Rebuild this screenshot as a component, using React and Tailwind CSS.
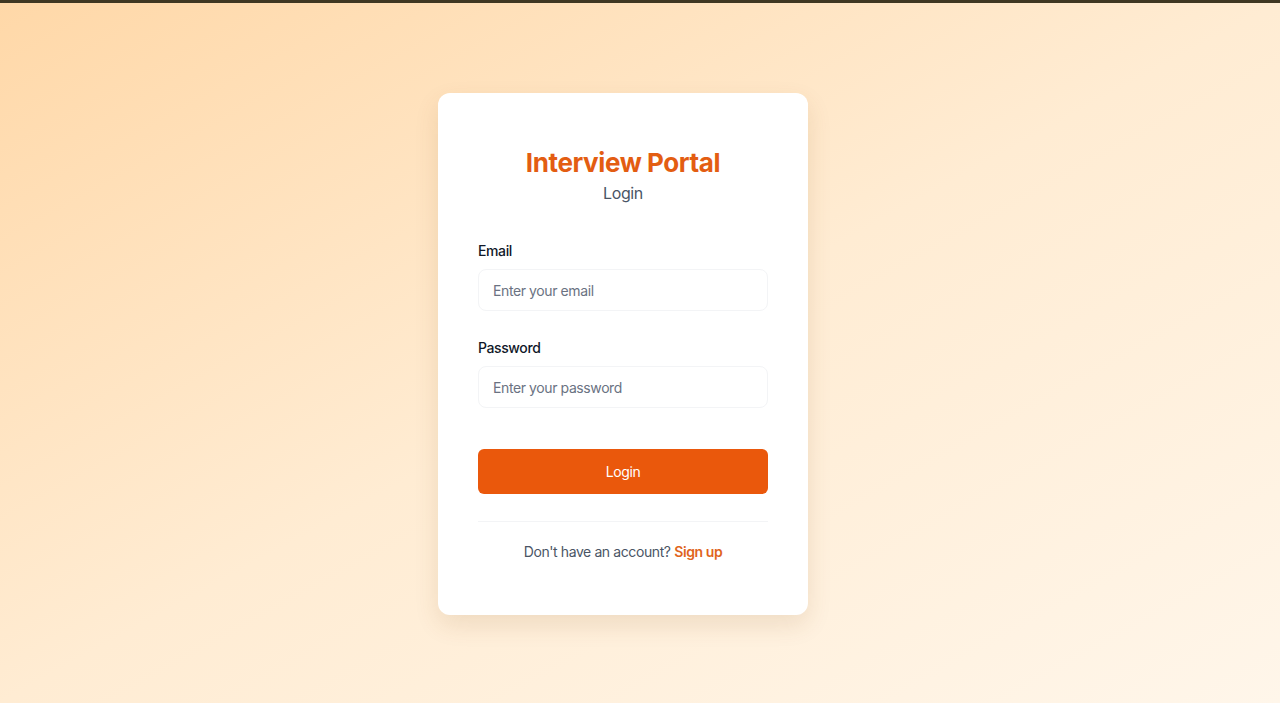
export default function App() {
  return (
    <div className="flex min-h-screen flex-col tracking-[-0.025em]" style={{ fontFamily: 'Inter, "Noto Sans", sans-serif' }}>
      <div className="h-[3px] bg-[#3f3722]" />
      <div className="flex flex-1 items-center justify-center bg-gradient-to-br from-[#ffd8a8] via-[#ffecd3] to-[#fff6ea] pt-[2px] pr-[34px]">
        <div className="w-[370px] rounded-xl bg-white px-10 pt-[52px] pb-[53px] shadow-[0_10px_25px_rgba(120,70,20,0.12)]">
          <div className="text-center">
            <h1 className="text-[26px] font-bold leading-9 text-[#e35d12]">Interview Portal</h1>
            <p className="text-base text-gray-600">Login</p>
          </div>

          <form className="mt-9" onSubmit={(e) => e.preventDefault()}>
            <div>
              <label className="mb-2 block text-sm font-medium text-gray-900">Email</label>
              <input
                type="email"
                placeholder="Enter your email"
                className="h-[42px] w-full rounded-lg border border-gray-100 px-3.5 text-sm text-gray-900 outline-none placeholder:text-gray-500"
              />
            </div>
            <div className="mt-[27px]">
              <label className="mb-2 block text-sm font-medium text-gray-900">Password</label>
              <input
                type="password"
                placeholder="Enter your password"
                className="h-[42px] w-full rounded-lg border border-gray-100 px-3.5 text-sm text-gray-900 outline-none placeholder:text-gray-500"
              />
            </div>
            <button
              type="submit"
              className="mt-[41px] h-[45px] w-full rounded-md bg-[#ea580c] text-sm font-normal text-white"
            >
              Login
            </button>
          </form>

          <div className="mt-[27px] border-t border-gray-100 pt-5 text-center text-sm text-gray-600">
            Don't have an account?{' '}
            <a href="#" className="font-semibold text-[#e0641c]">Sign up</a>
          </div>
        </div>
      </div>
    </div>
  );
}
